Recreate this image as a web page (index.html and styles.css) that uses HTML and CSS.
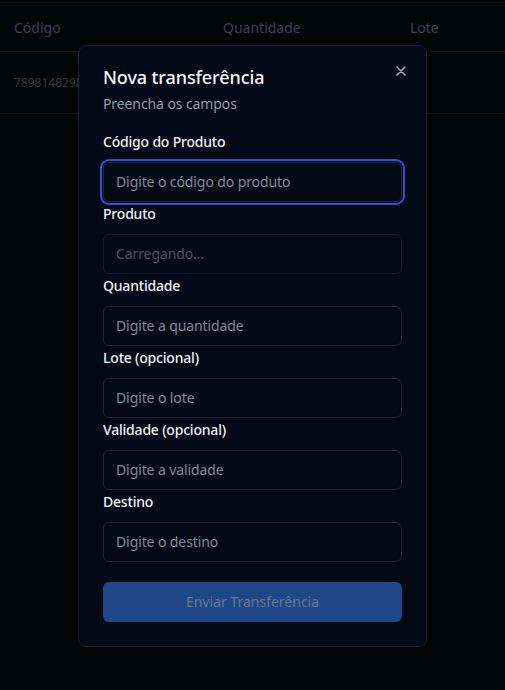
FILE: index.html
```html
<!DOCTYPE html>
<html lang="pt-BR">
<head>
<meta charset="utf-8">
<title>Transferências</title>
<link rel="stylesheet" href="styles.css">
</head>
<body>
<div class="table">
  <div class="row head">
    <div class="cell">Código</div>
    <div class="cell">Quantidade</div>
    <div class="cell">Lote</div>
  </div>
  <div class="row body-row">
    <div class="cell small">7898148298</div>
    <div class="cell"></div>
    <div class="cell"></div>
  </div>
</div>

<div class="overlay">
  <div class="modal">
    <button class="close" aria-label="Fechar">
      <svg width="10" height="10" viewBox="0 0 10 10"><path d="M1 1L9 9M9 1L1 9" stroke="currentColor" stroke-width="1.5" stroke-linecap="round"/></svg>
    </button>
    <div class="title">Nova transferência</div>
    <div class="subtitle">Preencha os campos</div>
    <form class="form">
      <label class="field">
        <span class="label">Código do Produto</span>
        <span class="input focused"><span class="ph">Digite o código do produto</span></span>
      </label>
      <label class="field">
        <span class="label">Produto</span>
        <span class="input disabled"><span class="ph">Carregando...</span></span>
      </label>
      <label class="field">
        <span class="label">Quantidade</span>
        <span class="input"><span class="ph">Digite a quantidade</span></span>
      </label>
      <label class="field">
        <span class="label">Lote (opcional)</span>
        <span class="input"><span class="ph">Digite o lote</span></span>
      </label>
      <label class="field">
        <span class="label">Validade (opcional)</span>
        <span class="input"><span class="ph">Digite a validade</span></span>
      </label>
      <label class="field">
        <span class="label">Destino</span>
        <span class="input"><span class="ph">Digite o destino</span></span>
      </label>
    </form>
    <div class="submit">Enviar Transferência</div>
  </div>
</div>
</body>
</html>
```

FILE: styles.css
```css
* { box-sizing: border-box; }
html, body { margin: 0; padding: 0; }
body {
  width: 505px;
  height: 690px;
  background: #030406;
  font-family: "Noto Sans", "DejaVu Sans", sans-serif;
  overflow: hidden;
  position: relative;
}
.table {
  border-top: 1px solid #0e1013;
  margin-top: 2px;
}
.row {
  display: grid;
  grid-template-columns: 209px 187px 1fr;
  padding-left: 14px;
  border-bottom: 1px solid #121418;
  align-items: center;
}
.head { height: 49px; }
.body-row { height: 62px; }
.cell {
  font-size: 14px;
  color: #3d424a;
}
.cell.small {
  font-size: 12px;
  color: #35383d;
}
.overlay {
  position: absolute;
  inset: 0;
  display: flex;
  align-items: flex-start;
  justify-content: center;
  padding-top: 45px;
}
.modal {
  position: relative;
  width: 349px;
  background: #040a15;
  border: 1px solid #1a2232;
  border-radius: 8px;
  padding: 17px 24px 24px;
  display: flex;
  flex-direction: column;
}
.close {
  position: absolute;
  top: 19px;
  right: 19px;
  width: 12px;
  height: 12px;
  padding: 0;
  border: 0;
  background: none;
  color: #a3acb9;
  display: flex;
  align-items: center;
  justify-content: center;
}
.title {
  font-size: 18px;
  line-height: 28px;
  font-weight: 500;
  color: #f5f7fa;
  letter-spacing: -0.1px;
}
.subtitle {
  margin-top: 3px;
  font-size: 14px;
  line-height: 20px;
  color: #909bac;
  letter-spacing: -0.1px;
}
.form {
  margin-top: 18px;
  display: flex;
  flex-direction: column;
  gap: 2px;
}
.field {
  display: flex;
  flex-direction: column;
  gap: 10px;
}
.label {
  font-size: 14px;
  line-height: 20px;
  font-weight: 500;
  color: #eef1f5;
  letter-spacing: -0.2px;
}
.input {
  height: 40px;
  border: 1px solid #1d2434;
  border-radius: 6px;
  padding: 0 12px 2px;
  display: flex;
  align-items: center;
  font-size: 14px;
  color: #818a99;
  letter-spacing: -0.1px;
}
.input.focused {
  box-shadow: 0 0 0 1px #040a15, 0 0 0 3px #2257d6;
}
.input.disabled {
  color: #4a5261;
  border-color: #151b28;
}
.submit {
  margin-top: 20px;
  height: 40px;
  border-radius: 6px;
  background: #1f4687;
  color: #6c7b92;
  font-size: 14px;
  font-weight: 400;
  padding-bottom: 1px;
  display: flex;
  align-items: center;
  justify-content: center;
}
```
